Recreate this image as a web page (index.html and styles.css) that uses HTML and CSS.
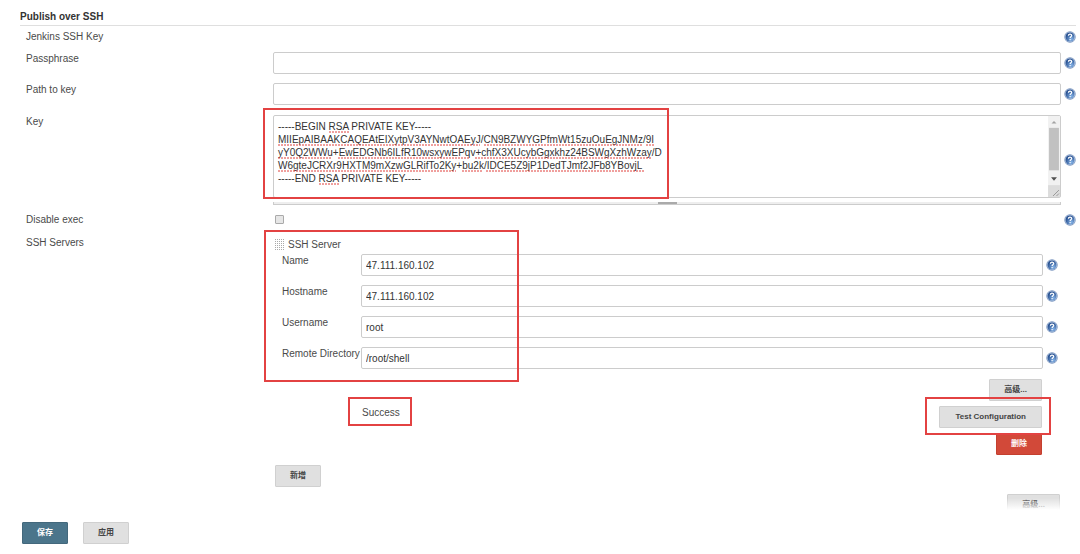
FILE: index.html
```html
<!DOCTYPE html>
<html lang="zh-CN">
<head>
<meta charset="utf-8">
<title>Publish over SSH</title>
<link rel="stylesheet" href="styles.css">
</head>
<body>
<svg width="0" height="0" class="defs" aria-hidden="true">
  <defs>
    <radialGradient id="ball" cx="65%" cy="75%" r="75%">
      <stop offset="0" stop-color="#86b4e8"/>
      <stop offset="1" stop-color="#1f4788"/>
    </radialGradient>
    <symbol id="help" viewBox="0 0 12 12">
      <circle cx="6" cy="6" r="5.700" fill="#7793bd"/>
      <circle cx="6" cy="6" r="5" fill="#c3d3ea"/>
      <circle cx="6" cy="6" r="4.500" fill="url(#ball)"/>
      <path d="M4.400 4.700C4.400 2.700 7.700 2.700 7.700 4.600C7.700 5.800 6.100 5.700 6.100 7.100M6.100 8.100V9.200" fill="none" stroke="#fff" stroke-width="1.200"/>
    </symbol>
  </defs>
</svg>
<form>
<main class="page">
  <h1 class="title">Publish over SSH</h1>

  <div class="row">
    <span class="label">Jenkins SSH Key</span><span></span>
    <a class="help" href="#" aria-label="Help"><svg><use href="#help"/></svg></a>
  </div>
  <div class="row">
    <label class="label" for="passphrase">Passphrase</label>
    <input class="field" id="passphrase" type="password">
    <a class="help" href="#" aria-label="Help"><svg><use href="#help"/></svg></a>
  </div>
  <div class="row">
    <label class="label" for="path">Path to key</label>
    <input class="field" id="path" type="text">
    <a class="help" href="#" aria-label="Help"><svg><use href="#help"/></svg></a>
  </div>
  <div class="row row-key">
    <label class="label" for="key">Key</label>
    <div class="key">
      <textarea class="field key-text" id="key" spellcheck="false" wrap="off">-----BEGIN RSA PRIVATE KEY-----
MIIEpAIBAAKCAQEAtEIXytpV3AYNwtOAEyJ/CN9BZWYGPfmWt15zuOuEgJNMz/9I
yY0Q2WWu+EwEDGNb6ILfR10wsxywEPqv+chfX3XUcybGgxkhz24BSWgXzhWzay/D
W6gteJCRXr9HXTM9mXzwGLRifTo2Ky+bu2k/IDCE5Z9jP1DedTJmf2JFb8YBovjL
-----END RSA PRIVATE KEY-----</textarea>
      <svg class="spelling" viewBox="0 0 400 70" aria-hidden="true">
        <path d="M51 12H71M0 25H202M206 25H364M368 25H376M0 38H54M60 38H191M197 38H373M0 51H178M184 51H205M208 51H366M41 64H61"/>
      </svg>
      <svg class="scroll" viewBox="0 0 12 82" aria-hidden="true">
        <path d="M0 0H12V82H0Z" fill="#f1f1f1"/>
        <path d="M1 12H11V55H1Z" fill="#c1c1c1"/>
        <path d="M3.500 7.500L6 5L8.500 7.500Z" fill="#a3a3a3"/>
        <path d="M3 62L6 65.500L9 62Z" fill="#505050"/>
        <path d="M0 70H12V82H0Z" fill="#dcdcdc"/>
        <path d="M5 81L11 75M8.500 81L11 78.500" stroke="#999" fill="none"/>
      </svg>
      <div class="grip"></div>
      <div class="mark mark-key"></div>
    </div>
    <a class="help" href="#" aria-label="Help"><svg><use href="#help"/></svg></a>
  </div>
  <div class="row row-check">
    <label class="label" for="disable">Disable exec</label>
    <input class="check" id="disable" type="checkbox">
    <a class="help" href="#" aria-label="Help"><svg><use href="#help"/></svg></a>
  </div>

  <div class="row row-servers">
    <span class="label">SSH Servers</span>
    <section class="servers">
      <div class="server-head">
        <svg class="handle" viewBox="0 0 9 12" aria-hidden="true">
          <path d="M.5 0V12M2.500 0V12M4.500 0V12M6.500 0V12M8.500 0V12"/>
        </svg>
        SSH Server
      </div>
      <div class="srow">
        <label class="label" for="name">Name</label>
        <input class="field" id="name" type="text" value="47.111.160.102">
        <a class="help" href="#" aria-label="Help"><svg><use href="#help"/></svg></a>
      </div>
      <div class="srow">
        <label class="label" for="host">Hostname</label>
        <input class="field" id="host" type="text" value="47.111.160.102">
        <a class="help" href="#" aria-label="Help"><svg><use href="#help"/></svg></a>
      </div>
      <div class="srow">
        <label class="label" for="user">Username</label>
        <input class="field" id="user" type="text" value="root">
        <a class="help" href="#" aria-label="Help"><svg><use href="#help"/></svg></a>
      </div>
      <div class="srow">
        <label class="label" for="dir">Remote Directory</label>
        <input class="field" id="dir" type="text" value="/root/shell">
        <a class="help" href="#" aria-label="Help"><svg><use href="#help"/></svg></a>
      </div>
      <div class="actions">
        <button class="btn" type="button">高级...</button>
        <div class="actions-test">
          <span class="status">Success<span class="mark mark-status"></span></span>
          <span class="test"><button class="btn btn-wide" type="button">Test Configuration</button><span class="mark mark-test"></span></span>
        </div>
        <button class="btn btn-danger" type="button">删除</button>
      </div>
      <button class="btn" type="button">新增</button>
      <div class="mark mark-server"></div>
    </section>
  </div>
  <div class="advanced"><button class="btn" type="button">高级...</button></div>
</main>
<footer class="bar">
  <button class="btn btn-primary" type="submit">保存</button>
  <button class="btn" type="button">应用</button>
</footer>
</form>
</body>
</html>
```
FILE: styles.css
```css
* { box-sizing: border-box; }

body {
  margin: 0;
  background: #fff;
  color: #4a4a4a;
  font: 10px/13px "Liberation Sans", Arial, "Noto Sans CJK SC", sans-serif;
}

.defs { display: block; }

.page { padding: 10px 4px 0 20px; }

.title {
  margin: 0 0 4px;
  height: 16px;
  border-bottom: 1px solid #dfdfdf;
  color: #333;
  font-size: 10px;
  line-height: 13px;
}

.row {
  display: grid;
  grid-template-columns: 247px minmax(0, 1fr) 15px;
  margin-bottom: 9px;
  padding-left: 6px;
}

.field {
  width: 100%;
  height: 22px;
  margin: 0;
  padding: 2px 4px;
  border: 1px solid #ccc;
  border-radius: 2px;
  background: #fff;
  color: #333;
  font: inherit;
}

.help {
  display: flex;
  align-items: center;
  padding-left: 3px;
}

.help svg {
  width: 12px;
  height: 12px;
}

.row-key { margin-bottom: 8px; padding-top: 1px; }

.key { position: relative; }

.key-text {
  display: block;
  height: 83px;
  padding: 4px;
  overflow: hidden;
  resize: none;
}

.spelling {
  position: absolute;
  top: 5px;
  left: 5px;
  width: 400px;
  height: 70px;
  pointer-events: none;
}

.spelling path {
  fill: none;
  stroke: #e0403c;
  stroke-dasharray: 2 1;
}

.scroll {
  position: absolute;
  top: 1px;
  right: 1px;
  width: 12px;
  height: 81px;
}

.grip {
  height: 3px;
  margin-top: 4px;
  border: 1px solid #ccc;
  border-top: 0;
  background: linear-gradient(#aaa, #aaa) center / 19px 3px no-repeat #eee;
}

.mark {
  position: absolute;
  border: 2px solid #e34242;
  pointer-events: none;
}

.mark-key { top: -7px; left: -10px; width: 406px; height: 91px; }

.row-check { align-items: center; }

.check {
  width: 9px;
  height: 9px;
  margin: 0 2px;
  appearance: none;
  border: 1px solid #aaa;
  border-radius: 1px;
  background: #e6e6e6;
}

.check:checked { background: #4b758b; }

.row-servers { margin-bottom: 7px; padding-top: 1px; }

.servers {
  position: relative;
  padding-top: 2px;
  padding-left: 2px;
}

.server-head {
  display: flex;
  align-items: center;
  gap: 4px;
  height: 13px;
  margin-bottom: 3px;
}

.handle {
  width: 9px;
  height: 12px;
}

.handle path {
  fill: none;
  stroke: #aaa;
  stroke-dasharray: 1 1;
}

.srow {
  display: grid;
  grid-template-columns: 79px minmax(0, 1fr) 18px;
  margin-bottom: 9px;
  padding-left: 7px;
}

.btn {
  height: 22px;
  padding: 0 14px;
  border: 1px solid #d0d0d0;
  border-radius: 1px;
  background: #e0e0e0;
  color: #444;
  font: bold 8px/12px "Liberation Sans", Arial, "Noto Sans CJK SC", sans-serif;
}

.btn-wide { padding: 0 15px; }

.btn-primary { border-color: #43687c; background: #4b758b; color: #fff; }

.btn-danger { border-color: #c4402f; background: #d24939; color: #fff; }

.actions {
  display: flex;
  flex-direction: column;
  align-items: flex-end;
  gap: 5px;
  padding: 1px 19px 10px 0;
}

.actions-test {
  display: flex;
  align-self: stretch;
  justify-content: space-between;
}

.status {
  position: relative;
  padding-left: 87px;
}

.mark-status { top: -9px; right: -12px; width: 64px; height: 29px; }

.test { position: relative; }

.mark-test { top: -9px; right: -9px; bottom: -7px; left: -14px; }

.mark-server { top: -6px; left: -9px; width: 255px; height: 152px; }

.advanced {
  display: flex;
  justify-content: flex-end;
  padding-right: 16px;
}

.bar {
  position: relative;
  display: flex;
  gap: 15px;
  margin-top: -6px;
  padding: 12px 22px 10px;
  background: #fff;
}

.bar::before {
  content: "";
  position: absolute;
  right: 0;
  bottom: 100%;
  left: 0;
  height: 12px;
  background: linear-gradient(transparent, #fff);
}
```
